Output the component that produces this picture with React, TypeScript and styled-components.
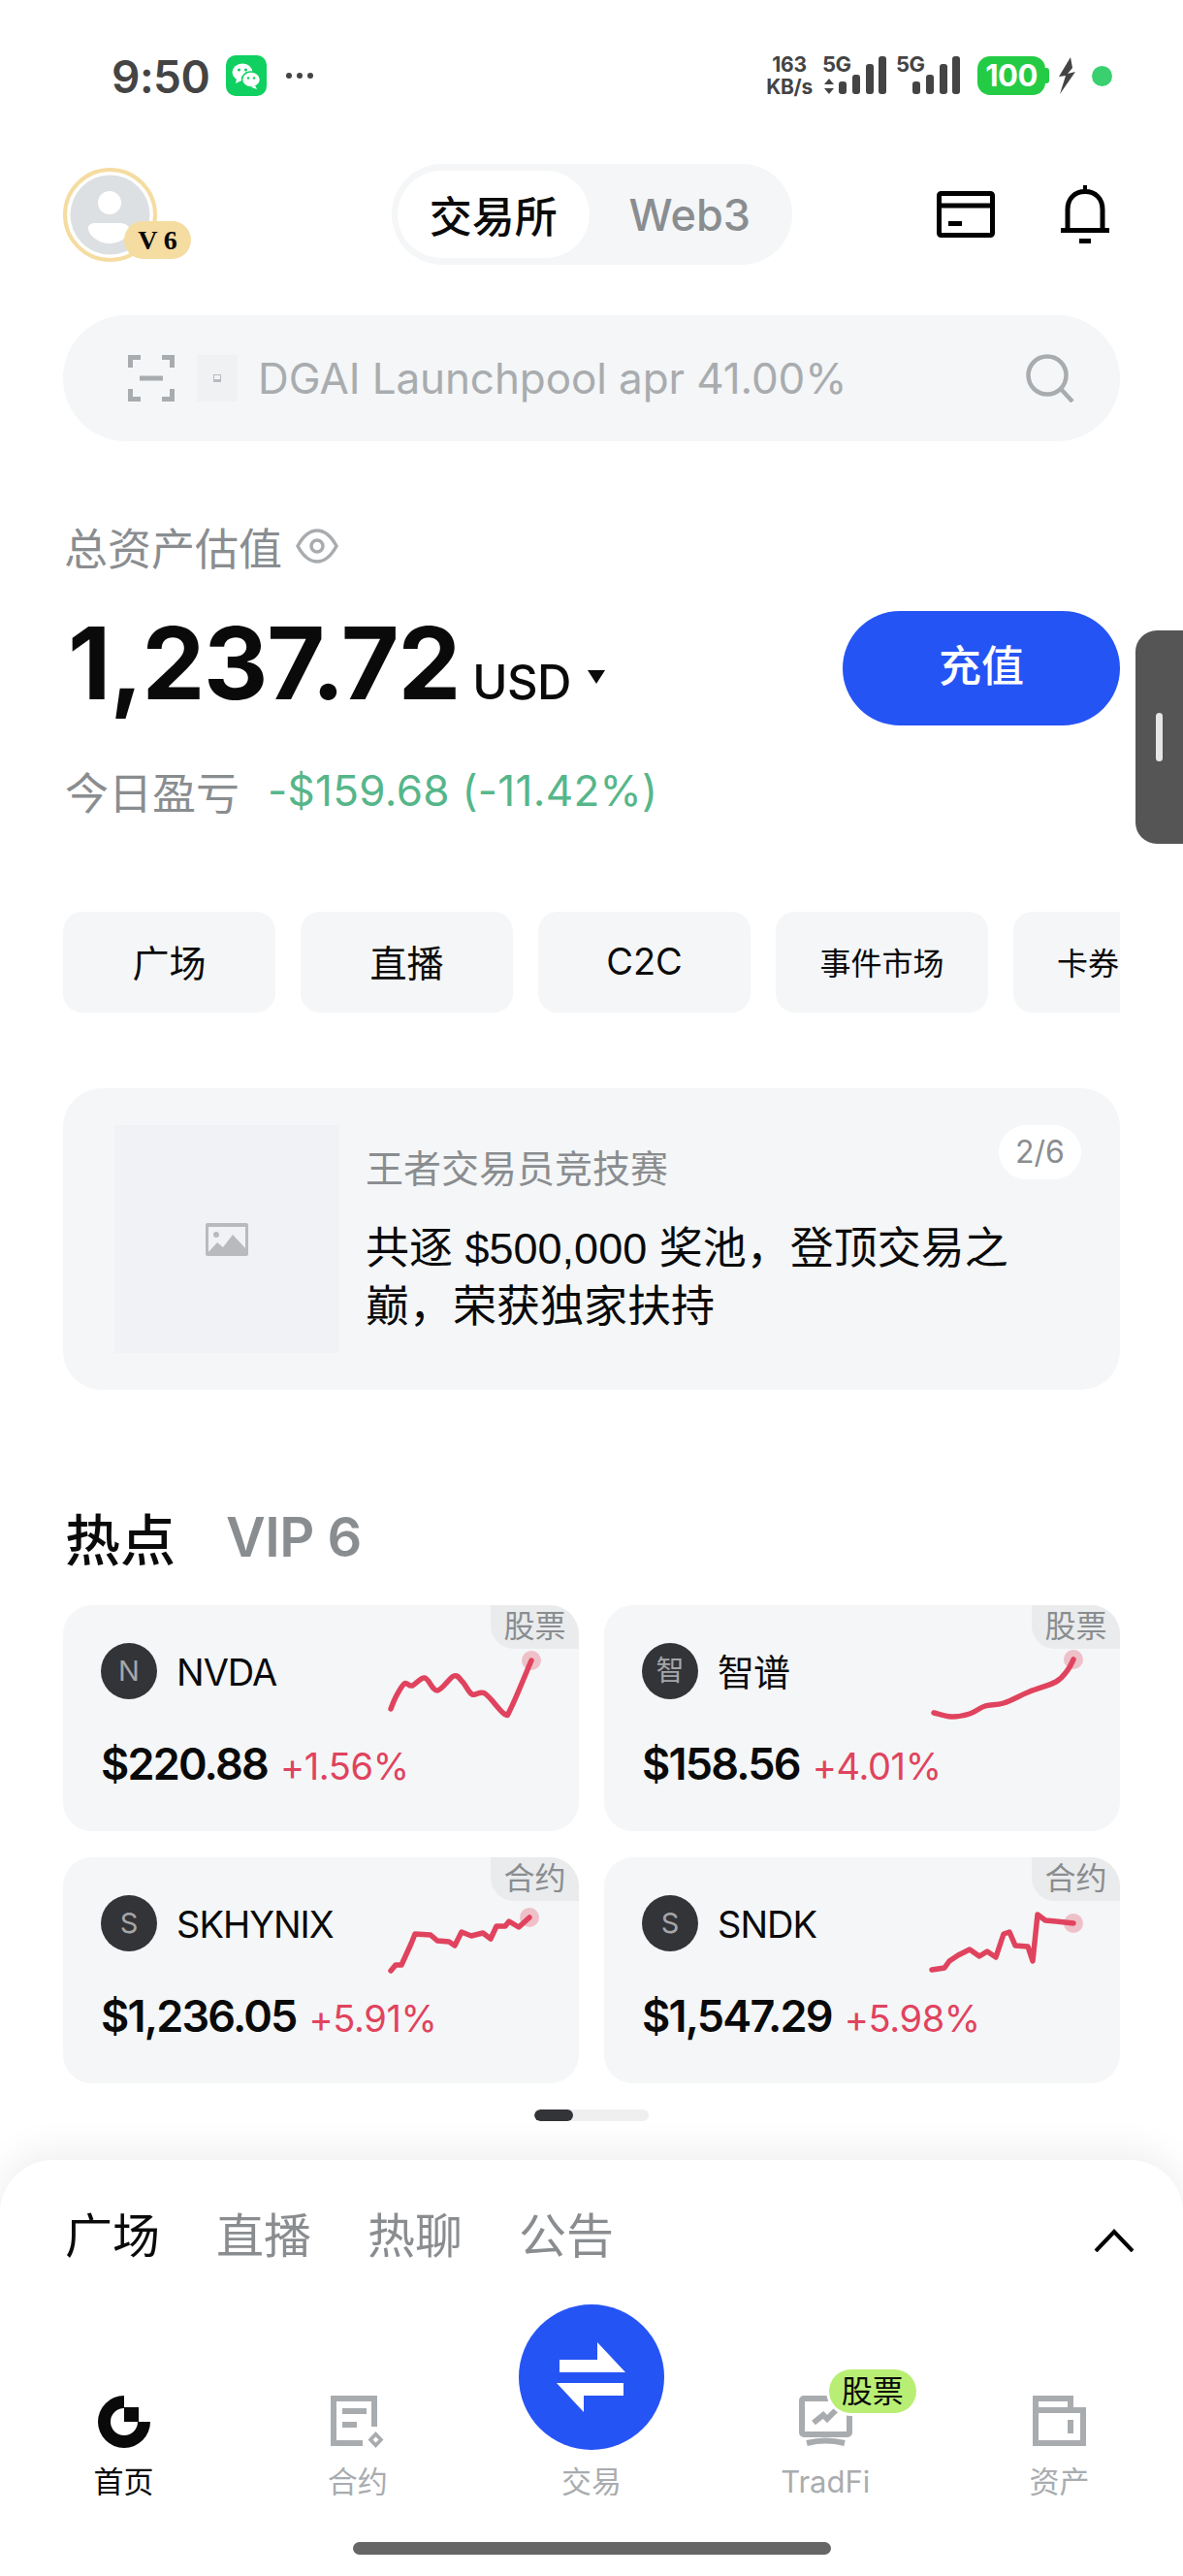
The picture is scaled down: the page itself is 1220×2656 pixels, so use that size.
import React, { FC } from "react";
import styled, { createGlobalStyle } from "styled-components";

const Colors = {
  PANEL: "#f4f6f7",
  BLUE: "#2554f5",
  GRAY: "#8a8d90",
  LIGHT_GRAY: "#a9acaf",
  RED: "#e0435e",
  GREEN: "#56b68a",
  GOLD: "#f5dca0",
  STATUS: "#444444",
  INK: "#0a0a0a"
};

const GlobalStyle = createGlobalStyle`
  html, body {
    margin: 0;
    padding: 0;
    background: #ffffff;
  }
  body {
    font-family: Inter, "Noto Sans CJK SC", sans-serif;
    color: ${Colors.INK};
  }
`;

const Page = styled.div`
  position: relative;
  width: 1220px;
  height: 2656px;
  overflow: hidden;
  display: flex;
  flex-direction: column;
  background: #ffffff;
`;

/* status bar */
const StatusBar = styled.div`
  height: 156px;
  flex: none;
  display: flex;
  align-items: center;
  justify-content: space-between;
  padding: 0 73px 0 115px;
  color: ${Colors.STATUS};
`;

const StatusGroup = styled.div`
  display: flex;
  align-items: center;
`;

const Clock = styled.div`
  font-size: 46px;
  font-weight: 600;
  letter-spacing: -0.5px;
  line-height: 1;
  width: 118px;
  padding-top: 2px;
`;

const StatusDots = styled.div`
  display: flex;
  gap: 5px;
  margin-left: 20px;
  span {
    width: 6px;
    height: 6px;
    border-radius: 50%;
    background: ${Colors.STATUS};
  }
`;

const NetSpeed = styled.div`
  display: flex;
  flex-direction: column;
  align-items: center;
  width: 52px;
  font-size: 21px;
  font-weight: 700;
  line-height: 23px;
  letter-spacing: -0.3px;
  margin-right: 8px;
`;

const SignalBox = styled.div<{ $gap?: number }>`
  position: relative;
  display: flex;
  height: 42px;
  margin-left: ${(props) => props.$gap || 0}px;
`;

const SignalLabel = styled.span`
  position: absolute;
  left: 0;
  top: -2px;
  font-size: 22px;
  font-weight: 700;
  line-height: 22px;
  letter-spacing: -0.5px;
`;

const Battery = styled.div`
  position: relative;
  width: 70px;
  height: 40px;
  margin-left: 18px;
  border-radius: 13px;
  background: #24cc46;
  color: #ffffff;
  font-size: 31px;
  font-weight: 700;
  line-height: 40px;
  text-align: center;
  letter-spacing: -0.5px;
  &::after {
    content: "";
    position: absolute;
    right: -4px;
    top: 12px;
    width: 4px;
    height: 16px;
    border-radius: 0 3px 3px 0;
    background: #24cc46;
  }
`;

const BoltWrap = styled.div`
  display: flex;
  margin-left: 13px;
`;

const CameraDot = styled.div`
  width: 21px;
  height: 21px;
  margin-left: 17px;
  border-radius: 50%;
  background: #3ad06f;
`;

/* top header */
const Header = styled.div`
  height: 104px;
  flex: none;
  margin-top: 13px;
  padding: 0 65px;
  display: grid;
  grid-template-columns: 1fr 413px 1fr;
  align-items: center;
`;

const Avatar = styled.div`
  position: relative;
  width: 97px;
  height: 97px;
`;

const LevelBadge = styled.span`
  position: absolute;
  left: 63px;
  top: 55px;
  width: 69px;
  height: 39px;
  border-radius: 20px;
  background: ${Colors.GOLD};
  font-family: "Liberation Serif", serif;
  font-size: 28px;
  font-weight: 700;
  line-height: 39px;
  text-align: center;
`;

const Toggle = styled.div`
  height: 104px;
  box-sizing: border-box;
  padding: 7px 6px;
  border-radius: 52px;
  background: ${Colors.PANEL};
  display: flex;
  align-items: center;
`;

const ToggleItem = styled.div<{ $active?: boolean }>`
  width: 199px;
  height: 90px;
  border-radius: 45px;
  display: flex;
  align-items: center;
  justify-content: center;
  font-size: ${(props) => (props.$active ? "44px" : "45px")};
  font-weight: 500;
  padding-left: ${(props) => (props.$active ? "0" : "4px")};
  background: ${(props) => (props.$active ? "#ffffff" : "transparent")};
  color: ${(props) => (props.$active ? Colors.INK : Colors.GRAY)};
`;

const HeaderIcons = styled.div`
  display: flex;
  align-items: center;
  justify-content: flex-end;
  gap: 67px;
  padding-right: 10px;
`;

/* search */
const SearchBar = styled.div`
  flex: none;
  height: 130px;
  margin: 52px 65px 0;
  padding: 0 47px 0 67px;
  border-radius: 65px;
  background: ${Colors.PANEL};
  display: flex;
  align-items: center;
`;

const TokenTile = styled.div`
  width: 42px;
  height: 48px;
  margin: 0 21px 0 23px;
  background: #eff1f3;
  display: flex;
  align-items: center;
  justify-content: center;
`;

const SearchText = styled.div`
  flex: 1;
  font-size: 44px;
  letter-spacing: -0.1px;
  color: ${Colors.LIGHT_GRAY};
`;

/* assets */
const AssetLabelRow = styled.div`
  flex: none;
  height: 60px;
  margin: 78px 65px 0 66px;
  display: flex;
  align-items: center;
  gap: 14px;
  font-size: 45px;
  color: ${Colors.GRAY};
`;

const BalanceRow = styled.div`
  flex: none;
  height: 118px;
  margin: 37px 65px 0 70px;
  display: flex;
  align-items: center;
  justify-content: space-between;
`;

const BalanceGroup = styled.div`
  display: flex;
  align-items: baseline;
  margin-top: -10px;
`;

const BalanceValue = styled.div`
  font-size: 103px;
  font-weight: 700;
  letter-spacing: -1.2px;
  line-height: 118px;
`;

const BalanceUnit = styled.div`
  margin-left: 13px;
  font-size: 49px;
  font-weight: 500;
  letter-spacing: -0.5px;
`;

const Caret = styled.span`
  align-self: center;
  width: 0;
  height: 0;
  margin: 28px 0 0 17px;
  border-left: 9px solid transparent;
  border-right: 9px solid transparent;
  border-top: 14px solid ${Colors.INK};
`;

const DepositButton = styled.div`
  width: 286px;
  height: 118px;
  box-sizing: border-box;
  padding-bottom: 10px;
  border-radius: 59px;
  background: ${Colors.BLUE};
  color: #ffffff;
  font-size: 44px;
  font-weight: 500;
  display: flex;
  align-items: center;
  justify-content: center;
`;

const PnlRow = styled.div`
  flex: none;
  height: 60px;
  margin: 37px 65px 0 67px;
  display: flex;
  align-items: center;
  gap: 29px;
  font-size: 45px;
  color: ${Colors.GRAY};
`;

const PnlValue = styled.span`
  color: ${Colors.GREEN};
  font-size: 44px;
  letter-spacing: 0.3px;
`;

const SideHandle = styled.div`
  position: absolute;
  left: 1171px;
  top: 650px;
  width: 49px;
  height: 220px;
  border-radius: 22px 0 0 22px;
  background: #555555;
  &::after {
    content: "";
    position: absolute;
    left: 21px;
    top: 85px;
    width: 7px;
    height: 50px;
    border-radius: 4px;
    background: #e6e6e6;
  }
`;

/* quick links */
const QuickRow = styled.div`
  flex: none;
  margin: 95px 65px 0;
  display: flex;
  gap: 26px;
  overflow: hidden;
`;

const QuickItem = styled.div<{ $small?: boolean; $start?: boolean }>`
  flex: none;
  width: 219px;
  height: 104px;
  box-sizing: border-box;
  padding-bottom: 3px;
  padding-left: ${(props) => (props.$start ? "45px" : "0")};
  border-radius: 20px;
  background: ${Colors.PANEL};
  display: flex;
  align-items: center;
  justify-content: ${(props) => (props.$start ? "flex-start" : "center")};
  font-size: ${(props) => (props.$small ? "32px" : "38px")};
`;

/* banner */
const Banner = styled.div`
  position: relative;
  flex: none;
  height: 311px;
  margin: 78px 65px 0;
  box-sizing: border-box;
  padding: 38px 0 0 53px;
  border-radius: 40px;
  background: ${Colors.PANEL};
  display: flex;
`;

const BannerImage = styled.div`
  flex: none;
  width: 232px;
  height: 235px;
  background: #f1f2f5;
  display: flex;
  align-items: center;
  justify-content: center;
`;

const BannerBody = styled.div`
  width: 690px;
  margin-left: 27px;
`;

const BannerTitle = styled.div`
  height: 54px;
  margin-top: 18px;
  font-size: 39px;
  line-height: 54px;
  color: ${Colors.GRAY};
`;

const BannerText = styled.div`
  margin-top: 26px;
  font-size: 45px;
  line-height: 60px;
  font-family: "Liberation Sans", "Noto Sans CJK SC", sans-serif;
`;

const PageBadge = styled.span`
  position: absolute;
  right: 40px;
  top: 38px;
  width: 85px;
  height: 56px;
  border-radius: 28px;
  background: #ffffff;
  color: ${Colors.GRAY};
  font-size: 32px;
  line-height: 56px;
  text-align: center;
`;

/* hot section */
const SectionTitle = styled.div`
  flex: none;
  height: 70px;
  margin: 116px 65px 0 67px;
  display: flex;
  align-items: center;
  gap: 52px;
  font-size: 57px;
  font-weight: 500;
`;

const SectionAside = styled.span`
  color: ${Colors.GRAY};
  font-size: 56px;
  font-weight: 600;
  letter-spacing: -0.5px;
  padding-top: 2px;
`;

const CardGrid = styled.div`
  flex: none;
  margin: 36px 65px 0;
  display: grid;
  grid-template-columns: 532px 532px;
  gap: 27px 26px;
`;

const Card = styled.div`
  position: relative;
  height: 233px;
  box-sizing: border-box;
  padding: 39px 32px 0 39px;
  border-radius: 30px;
  background: ${Colors.PANEL};
  overflow: hidden;
`;

const CardTag = styled.span`
  position: absolute;
  top: 0;
  right: 0;
  width: 91px;
  height: 45px;
  border-radius: 0 0 0 24px;
  background: #e9ebec;
  color: ${Colors.GRAY};
  font-size: 32px;
  line-height: 44px;
  text-align: center;
`;

const CardHead = styled.div`
  height: 81px;
  display: flex;
  align-items: flex-start;
`;

const CoinIcon = styled.div`
  flex: none;
  width: 58px;
  height: 58px;
  border-radius: 50%;
  background: #333438;
  color: #a5a6a8;
  font-size: 29px;
  line-height: 58px;
  text-align: center;
`;

const CoinName = styled.div`
  flex: 1;
  margin-left: 20px;
  font-size: 38px;
  line-height: 60px;
  letter-spacing: -1px;
`;

const CardPrice = styled.div`
  display: flex;
  align-items: baseline;
  gap: 13px;
  margin-top: 14px;
`;

const PriceValue = styled.span`
  font-size: 45px;
  font-weight: 600;
  letter-spacing: -1.8px;
  line-height: 60px;
`;

const PriceChange = styled.span`
  font-size: 38px;
  color: ${Colors.RED};
  letter-spacing: -0.4px;
`;

const Pager = styled.div`
  flex: none;
  align-self: center;
  width: 118px;
  height: 12px;
  margin-top: 27px;
  border-radius: 6px;
  background: #efefef;
  overflow: hidden;
  &::before {
    content: "";
    display: block;
    width: 40px;
    height: 12px;
    border-radius: 6px;
    background: #333438;
  }
`;

/* bottom sheet */
const Sheet = styled.div`
  flex: 1;
  margin-top: 40px;
  border-radius: 55px 55px 0 0;
  background: #ffffff;
  box-shadow: 0 -8px 40px rgba(0, 0, 0, 0.07);
  display: flex;
  flex-direction: column;
`;

const SheetTabs = styled.div`
  height: 60px;
  margin-top: 44px;
  padding: 0 50px 0 67px;
  display: flex;
  align-items: center;
  gap: 58px;
`;

const SheetTab = styled.span<{ $active?: boolean }>`
  font-size: 49px;
  color: ${(props) => (props.$active ? Colors.INK : Colors.GRAY)};
`;

const TabChevron = styled.svg`
  margin: 18px 0 0 auto;
`;

const Nav = styled.div`
  margin-top: 45px;
  padding: 0 7px;
  display: grid;
  grid-template-columns: repeat(5, 1fr);
  align-items: end;
`;

const NavItem = styled.div<{ $active?: boolean }>`
  display: flex;
  flex-direction: column;
  align-items: center;
  font-size: 31px;
  line-height: 30px;
  color: ${(props) => (props.$active ? Colors.INK : Colors.LIGHT_GRAY)};
`;

const NavIcon = styled.div`
  position: relative;
  width: 55px;
  height: 54px;
  margin-bottom: 20px;
  display: flex;
  justify-content: center;
`;

const TradeButton = styled.div`
  width: 150px;
  height: 150px;
  margin-bottom: 18px;
  border-radius: 50%;
  background: ${Colors.BLUE};
  display: flex;
  align-items: center;
  justify-content: center;
`;

const NavBadge = styled.span`
  position: absolute;
  left: 31px;
  top: -27px;
  width: 90px;
  height: 45px;
  border-radius: 23px;
  background: #b9ee74;
  box-shadow: 0 0 0 3px #ffffff;
  color: ${Colors.INK};
  font-size: 32px;
  line-height: 45px;
  text-align: center;
`;

const HomeIndicator = styled.div`
  align-self: center;
  width: 493px;
  height: 13px;
  margin-top: 47px;
  border-radius: 7px;
  background: #666666;
`;

/* drawings */
const WeChatIcon = () => (
  <svg width="42" height="42" viewBox="0 0 42 42">
    <rect width="42" height="42" rx="10" fill="#0fd060" />
    <ellipse cx="17" cy="17.5" rx="10.5" ry="9" fill="#fff" />
    <path d="M11 24l-1 5 6-3z" fill="#fff" />
    <ellipse cx="26" cy="25" rx="9.5" ry="8" fill="#fff" stroke="#0fd060" strokeWidth="1.5" />
    <path d="M30 31l2 4-6-2z" fill="#fff" />
    <circle cx="13.5" cy="15" r="1.6" fill="#0fd060" />
    <circle cx="20.5" cy="15" r="1.6" fill="#0fd060" />
    <circle cx="23" cy="23.5" r="1.3" fill="#0fd060" />
    <circle cx="29" cy="23.5" r="1.3" fill="#0fd060" />
  </svg>
);

const SignalBars: FC<{ arrows?: boolean }> = ({ arrows }) => (
  <svg width="66" height="42" viewBox="0 0 66 42" fill={Colors.STATUS}>
    {arrows && <path d="M7 24l5 6H2zM7 40l5-6H2z" />}
    <rect x="17" y="27" width="8" height="13" rx="3" />
    <rect x="31" y="20" width="8" height="20" rx="3" />
    <rect x="45" y="9" width="8" height="31" rx="3" />
    <rect x="58" y="1" width="8" height="39" rx="3" />
  </svg>
);

const BoltIcon = () => (
  <svg width="18" height="38" viewBox="0 0 18 38" fill={Colors.STATUS}>
    <path d="M13 0L1 20l7-1-6 19L18 15l-8 2 5-6z" />
  </svg>
);

const AvatarArt = () => (
  <svg width="97" height="97" viewBox="0 0 97 97">
    <circle cx="48.5" cy="48.5" r="46.5" fill="#fff" stroke={Colors.GOLD} strokeWidth="4" />
    <circle cx="48.5" cy="48.5" r="41" fill="#dde0e2" />
    <circle cx="48" cy="36" r="12" fill="#fff" />
    <path d="M26 62c0-3 3-5 7-5h26c6 0 10 4 10 8-3 8-12 13-21 13-11 0-22-8-22-16z" fill="#fff" />
  </svg>
);

const CardIcon = () => (
  <svg width="60" height="48" viewBox="0 0 60 48" fill="none" stroke="#000" strokeWidth="5">
    <rect x="2.5" y="2.5" width="55" height="43" rx="2" />
    <path d="M3 15h54" />
    <path d="M12 33.5h14" />
  </svg>
);

const BellIcon = () => (
  <svg width="52" height="60" viewBox="0 0 52 60" fill="none" stroke="#000" strokeWidth="5">
    <path d="M26 0v7" strokeWidth="4" />
    <path d="M8 46V25C8 14 15 6.5 26 6.5S44 14 44 25v21" />
    <path d="M1 46.5h50" />
    <path d="M20 57.5h12" />
  </svg>
);

const ScanIcon = () => (
  <svg width="48" height="48" viewBox="0 0 48 48" fill="none" stroke={Colors.LIGHT_GRAY} strokeWidth="5">
    <path d="M2.5 13V2.5H13M35 2.5h10.5V13M2.5 35v10.5H13M35 45.5h10.5V35" />
    <path d="M12 24h24" />
  </svg>
);

const TinyPicture = () => (
  <svg width="8" height="8" viewBox="0 0 8 8">
    <rect width="8" height="8" fill="#b8babd" />
    <rect x="1" y="1" width="6" height="4" fill="#f1f2f5" />
  </svg>
);

const SearchIcon = () => (
  <svg width="50" height="50" viewBox="0 0 50 50" fill="none" stroke={Colors.LIGHT_GRAY} strokeWidth="4.5">
    <circle cx="22" cy="22" r="19.5" />
    <path d="M36 36l12 13" />
  </svg>
);

const EyeIcon = () => (
  <svg width="44" height="36" viewBox="0 0 44 36" fill="none" stroke={Colors.LIGHT_GRAY} strokeWidth="3.5">
    <path d="M2 18C8 7 15 2 22 2s14 5 20 16c-6 11-13 16-20 16S8 29 2 18z" />
    <circle cx="22" cy="18" r="6" />
  </svg>
);

const PictureIcon = () => (
  <svg width="44" height="34" viewBox="0 0 44 34">
    <rect width="44" height="34" rx="2" fill="#b8babd" />
    <rect x="3" y="4" width="38" height="26" fill="#f1f2f5" />
    <circle cx="11" cy="12" r="3" fill="#b8babd" />
    <path d="M3 30l9-10 6 5 10-13 13 14v4z" fill="#b8babd" />
  </svg>
);

const HomeNavIcon = () => (
  <svg width="54" height="54" viewBox="0 0 54 54" fill={Colors.INK}>
    <path d="M27 0A27 27 0 1 0 54 27H41A14 14 0 1 1 27 13Z" />
    <path d="M27 12H42V27H27Z" />
  </svg>
);

const ContractNavIcon = () => (
  <svg width="55" height="54" viewBox="0 0 55 54" fill="none" stroke={Colors.LIGHT_GRAY} strokeWidth="6">
    <path d="M33 49H3V3h42v29" />
    <path d="M12 16h25M12 30h15" />
    <path d="M46.5 37l8 8.5-8 8.5-8-8.5z" fill={Colors.LIGHT_GRAY} stroke="none" />
    <path d="M46.5 42.5l3 3-3 3-3-3z" fill="#fff" stroke="none" />
  </svg>
);

const SwapIcon = () => (
  <svg width="72" height="72" viewBox="0 0 72 72" fill="#fff">
    <path d="M42 0l29 31H3V18h39z" />
    <path d="M0 42h69v13H28v17z" />
  </svg>
);

const MonitorNavIcon = () => (
  <svg width="55" height="54" viewBox="0 0 55 54" fill="none" stroke={Colors.LIGHT_GRAY} strokeWidth="6">
    <rect x="3" y="3" width="49" height="37" rx="2" />
    <path d="M15 28l10-8 4 4 9-9" />
    <path d="M8 49c12-3 27-3 39 0" />
  </svg>
);

const WalletNavIcon = () => (
  <svg width="55" height="54" viewBox="0 0 55 54" fill="none" stroke={Colors.LIGHT_GRAY} strokeWidth="6">
    <path d="M3 49V3h36v12h13v34z" />
    <path d="M3 15h36" />
    <path d="M39 25v14" />
  </svg>
);

type Point = [number, number];

// catmull-rom through the points, for the calmer lines
const toPath = (points: Point[], smooth?: boolean): string => {
  if (!smooth) {
    return points.map((p, i) => `${i ? "L" : "M"}${p[0]} ${p[1]}`).join("");
  }
  let d = `M${points[0][0]} ${points[0][1]}`;
  for (let i = 0; i < points.length - 1; i++) {
    const p0 = points[Math.max(i - 1, 0)];
    const p1 = points[i];
    const p2 = points[i + 1];
    const p3 = points[Math.min(i + 2, points.length - 1)];
    const c1x = p1[0] + (p2[0] - p0[0]) / 6;
    const c1y = p1[1] + (p2[1] - p0[1]) / 6;
    const c2x = p2[0] - (p3[0] - p1[0]) / 6;
    const c2y = p2[1] - (p3[1] - p1[1]) / 6;
    d += `C${c1x} ${c1y} ${c2x} ${c2y} ${p2[0]} ${p2[1]}`;
  }
  return d;
};

const Sparkline: FC<{ points: Point[]; smooth?: boolean }> = ({ points, smooth }) => {
  const end = points[points.length - 1];
  return (
    <svg width="170" height="81" viewBox="0 0 170 81" fill="none">
      <circle cx={end[0]} cy={end[1]} r="10" fill={Colors.RED} opacity="0.3" />
      <path
        d={toPath(points, smooth)}
        stroke={Colors.RED}
        strokeWidth="5.5"
        strokeLinejoin="round"
        strokeLinecap="round"
      />
    </svg>
  );
};

const markets = [
  {
    icon: "N",
    name: "NVDA",
    tag: "股票",
    price: "$220.88",
    change: "+1.56%",
    smooth: true,
    points: [[8, 68], [13, 56], [22, 42], [30, 44], [43, 36], [56, 49], [73, 34], [82, 40], [92, 53], [105, 52], [125, 73], [132, 67], [153, 18]] as Point[]
  },
  {
    icon: "智",
    name: "智谱",
    tag: "股票",
    price: "$158.56",
    change: "+4.01%",
    smooth: true,
    points: [[10, 72], [28, 76], [47, 73], [63, 65], [82, 62], [109, 50], [136, 40], [148, 28], [154, 17]] as Point[]
  },
  {
    icon: "S",
    name: "SKHYNIX",
    tag: "合约",
    price: "$1,236.05",
    change: "+5.91%",
    points: [[8, 78], [13, 72], [19, 72], [29, 50], [33, 40], [49, 41], [56, 47], [68, 48], [74, 52], [81, 38], [91, 42], [103, 39], [111, 45], [117, 32], [126, 32], [130, 27], [140, 33], [151, 23]] as Point[]
  },
  {
    icon: "S",
    name: "SNDK",
    tag: "合约",
    price: "$1,547.29",
    change: "+5.98%",
    points: [[8, 77], [21, 75], [26, 68], [35, 62], [47, 56], [57, 63], [65, 58], [74, 64], [82, 40], [88, 38], [94, 52], [107, 53], [112, 68], [117, 20], [125, 26], [136, 27], [154, 29]] as Point[]
  }
];

const App: FC = () => (
  <Page>
    <GlobalStyle />
    <StatusBar>
      <StatusGroup>
        <Clock>9:50</Clock>
        <WeChatIcon />
        <StatusDots>
          <span />
          <span />
          <span />
        </StatusDots>
      </StatusGroup>
      <StatusGroup>
        <NetSpeed>
          <span>163</span>
          <span>KB/s</span>
        </NetSpeed>
        <SignalBox>
          <SignalLabel>5G</SignalLabel>
          <SignalBars arrows />
        </SignalBox>
        <SignalBox $gap={10}>
          <SignalLabel>5G</SignalLabel>
          <SignalBars />
        </SignalBox>
        <Battery>100</Battery>
        <BoltWrap>
          <BoltIcon />
        </BoltWrap>
        <CameraDot />
      </StatusGroup>
    </StatusBar>

    <Header>
      <Avatar>
        <AvatarArt />
        <LevelBadge>V 6</LevelBadge>
      </Avatar>
      <Toggle>
        <ToggleItem $active>交易所</ToggleItem>
        <ToggleItem>Web3</ToggleItem>
      </Toggle>
      <HeaderIcons>
        <CardIcon />
        <BellIcon />
      </HeaderIcons>
    </Header>

    <SearchBar>
      <ScanIcon />
      <TokenTile>
        <TinyPicture />
      </TokenTile>
      <SearchText>DGAI Launchpool apr 41.00%</SearchText>
      <SearchIcon />
    </SearchBar>

    <AssetLabelRow>
      总资产估值
      <EyeIcon />
    </AssetLabelRow>
    <BalanceRow>
      <BalanceGroup>
        <BalanceValue>1,237.72</BalanceValue>
        <BalanceUnit>USD</BalanceUnit>
        <Caret />
      </BalanceGroup>
      <DepositButton>充值</DepositButton>
    </BalanceRow>
    <PnlRow>
      今日盈亏
      <PnlValue>-$159.68 (-11.42%)</PnlValue>
    </PnlRow>
    <SideHandle />

    <QuickRow>
      <QuickItem>广场</QuickItem>
      <QuickItem>直播</QuickItem>
      <QuickItem>C2C</QuickItem>
      <QuickItem $small>事件市场</QuickItem>
      <QuickItem $small $start>卡券</QuickItem>
    </QuickRow>

    <Banner>
      <BannerImage>
        <PictureIcon />
      </BannerImage>
      <BannerBody>
        <BannerTitle>王者交易员竞技赛</BannerTitle>
        <BannerText>共逐 $500,000 奖池，登顶交易之巅，荣获独家扶持</BannerText>
      </BannerBody>
      <PageBadge>2/6</PageBadge>
    </Banner>

    <SectionTitle>
      热点
      <SectionAside>VIP 6</SectionAside>
    </SectionTitle>

    <CardGrid>
      {markets.map((m) => (
        <Card key={m.name}>
          <CardTag>{m.tag}</CardTag>
          <CardHead>
            <CoinIcon>{m.icon}</CoinIcon>
            <CoinName>{m.name}</CoinName>
            <Sparkline points={m.points} smooth={m.smooth} />
          </CardHead>
          <CardPrice>
            <PriceValue>{m.price}</PriceValue>
            <PriceChange>{m.change}</PriceChange>
          </CardPrice>
        </Card>
      ))}
    </CardGrid>
    <Pager />

    <Sheet>
      <SheetTabs>
        <SheetTab $active>广场</SheetTab>
        <SheetTab>直播</SheetTab>
        <SheetTab>热聊</SheetTab>
        <SheetTab>公告</SheetTab>
        <TabChevron width="42" height="24" viewBox="0 0 42 24" fill="none" stroke="#000" strokeWidth="4">
          <path d="M2 23L21 3l19 20" />
        </TabChevron>
      </SheetTabs>
      <Nav>
        <NavItem $active>
          <NavIcon>
            <HomeNavIcon />
          </NavIcon>
          首页
        </NavItem>
        <NavItem>
          <NavIcon>
            <ContractNavIcon />
          </NavIcon>
          合约
        </NavItem>
        <NavItem>
          <TradeButton>
            <SwapIcon />
          </TradeButton>
          交易
        </NavItem>
        <NavItem>
          <NavIcon>
            <MonitorNavIcon />
            <NavBadge>股票</NavBadge>
          </NavIcon>
          TradFi
        </NavItem>
        <NavItem>
          <NavIcon>
            <WalletNavIcon />
          </NavIcon>
          资产
        </NavItem>
      </Nav>
      <HomeIndicator />
    </Sheet>
  </Page>
);

export default App;
